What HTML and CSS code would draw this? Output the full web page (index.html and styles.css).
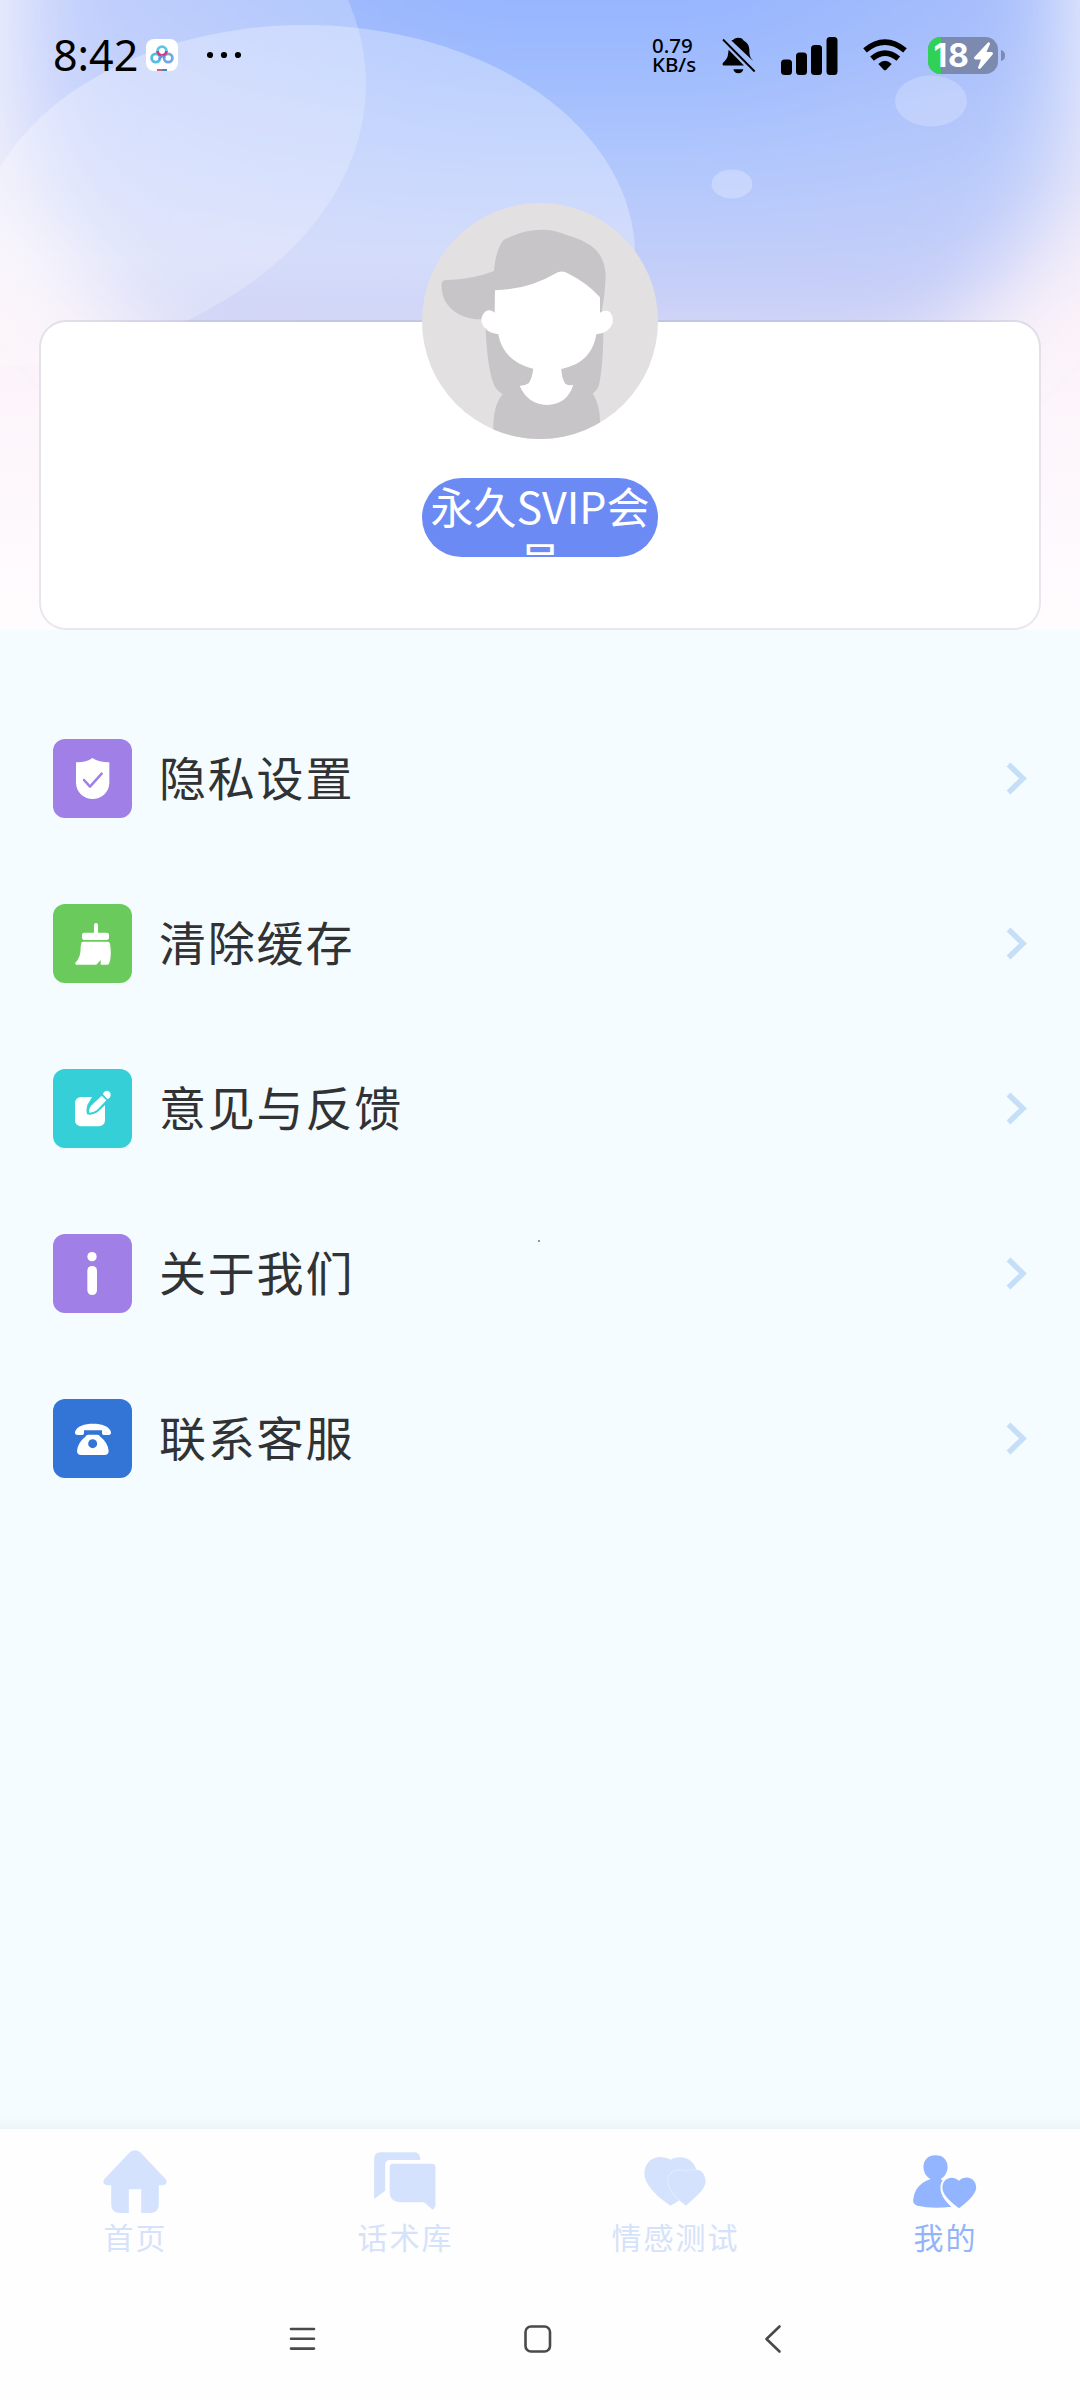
FILE: index.html
```html
<!DOCTYPE html>
<html lang="zh-CN">
<head>
<meta charset="utf-8">
<title>我的</title>
<link rel="stylesheet" href="styles.css">
</head>
<body>
<header class="hero">
  <svg class="hero-bg" viewBox="0 0 1080 630" preserveAspectRatio="none" aria-hidden="true">
    <defs>
      <linearGradient id="edge" x1="0" y1="0" x2="0" y2="1">
        <stop offset="0" stop-color="#f4f5fe"/>
        <stop offset=".3" stop-color="#f1edf9"/>
        <stop offset=".5" stop-color="#fbf2f9"/>
        <stop offset="1" stop-color="#fffcfe"/>
      </linearGradient>
      <linearGradient id="sky" gradientUnits="userSpaceOnUse" x1="0" y1="0" x2="0" y2="340">
        <stop offset="0" stop-color="#94b4fe"/>
        <stop offset=".5" stop-color="#b1c8fd"/>
        <stop offset="1" stop-color="#d0d2f5"/>
      </linearGradient>
      <linearGradient id="lilac" x1="0" y1="0" x2="1" y2="0">
        <stop offset="0" stop-color="#d3d2f6" stop-opacity=".5"/>
        <stop offset=".45" stop-color="#c4caf6" stop-opacity="0"/>
        <stop offset=".65" stop-color="#c4caf6" stop-opacity="0"/>
        <stop offset="1" stop-color="#ccd2f7" stop-opacity=".4"/>
      </linearGradient>
      <linearGradient id="veil" gradientUnits="userSpaceOnUse" x1="0" y1="260" x2="0" y2="335">
        <stop offset="0" stop-color="#fff" stop-opacity=".3"/>
        <stop offset="1" stop-color="#fff" stop-opacity="0"/>
      </linearGradient>
      <filter id="soft" x="-20%" y="-20%" width="140%" height="140%"><feGaussianBlur stdDeviation="46 42"/></filter>
    </defs>
    <rect width="1080" height="630" fill="url(#edge)"/>
    <g filter="url(#soft)">
      <path d="M16-200H1070V130Q1040 290 900 370H190Q50 280 16 110Z" fill="url(#sky)"/>
      <path d="M16-200H1070V130Q1040 290 900 370H190Q50 280 16 110Z" fill="url(#lilac)"/>
    </g>
    <g fill="#fff" fill-opacity=".22">
      <ellipse cx="-36" cy="84" rx="402" ry="284"/>
      <ellipse cx="305" cy="255" rx="330" ry="230" fill="url(#veil)" fill-opacity="1"/>
      <ellipse cx="931" cy="101" rx="36" ry="25.5"/>
      <ellipse cx="732" cy="184" rx="20.5" ry="14.5" fill-opacity=".26"/>
    </g>
  </svg>

  <div class="status">
    <div class="status-side">
      <span class="time">8:42</span>
      <svg class="app" viewBox="0 0 32 32">
        <rect width="32" height="32" rx="8" fill="#fff"/>
        <g fill="none" stroke-width="2.8">
          <circle cx="9.8" cy="19" r="4.2" stroke="#55bde3"/>
          <circle cx="22.2" cy="19" r="4.2" stroke="#6fa9e6"/>
          <circle cx="16" cy="12" r="4.4" stroke="#5cc6e4"/>
          <path d="M11.600 12a4.400 4.400 0 0 0 8.800 0" stroke="#d93a7c"/>
          <path d="M12.800 20.500L16 16.800L19 19" stroke="#6a8fdc" stroke-width="2"/>
        </g>
        <path d="M11 30h5v2h-5z" fill="#e05a72"/><path d="M16 30h5v2h-5z" fill="#4484b8"/>
      </svg>
      <svg class="dots" viewBox="0 0 34 8"><circle cx="3" cy="4" r="3.1"/><circle cx="17" cy="4" r="3.1"/><circle cx="31" cy="4" r="3.1"/></svg>
    </div>
    <div class="status-side">
      <span class="speed">0.79<br>KB/s</span>
      <svg class="bell" viewBox="304 108 102 110">
        <path d="M332 118Q340 117 341 113Q353 107 365 113Q367 118 373 121Q385 129 386 145Q386 165 391 171L398 180ZM324 146L370 193H308Q304 191 307 185Q321 172 322 160ZM338 204H368Q365 216 353 216T338 204Z"/>
        <path d="M307 115L402 211" stroke="#000" stroke-width="5.5"/>
      </svg>
      <svg class="signal" viewBox="0 0 57 38"><rect x="0" y="22.500" width="11" height="15.500" rx="3.500"/><rect x="15" y="15.500" width="11" height="22.500" rx="3.500"/><rect x="30" y="8" width="11" height="30" rx="3.500"/><rect x="45.500" y="0" width="11" height="38" rx="3.500"/></svg>
      <svg class="wifi" viewBox="730 115 132 96">
        <g fill="none" stroke="#000" stroke-width="17"><path d="M736 149Q796 100 856 149"/><path d="M757 174Q796 141 836 174"/></g>
        <path d="M776 190Q796 170 816 190L800 207Q796 211 792 207Z"/>
      </svg>
      <svg class="battery" viewBox="0 0 77 37">
        <defs><clipPath id="cell"><rect width="70" height="37" rx="12.500"/></clipPath></defs>
        <g clip-path="url(#cell)"><path d="M0 0h70v37H0z" fill="#7c8aaf"/><path d="M0 0h13v37H0z" fill="#31d158"/></g>
        <path d="M73 13q4 1 4 5.500t-4 5.500z" fill="#7c8aaf"/>
        <text x="5.500" y="30" class="charge">18</text>
        <path d="M60 5.500L46 20.500Q46 22.500 47.500 22.500H53L50 30.500Q50.500 33 53 31L65 17Q65 15 63.500 15H58.500L62 7Q62 4.500 60 5.500Z" fill="#fff"/>
      </svg>
    </div>
  </div>

  <section class="card">
    <svg class="avatar" viewBox="66 39 708 708">
      <defs><clipPath id="round"><circle cx="420" cy="393" r="354"/></clipPath></defs>
      <g clip-path="url(#round)">
        <path d="M66 39h708v708H66z" fill="#e2e0e1"/>
        <path fill="#c7c5c7" d="M282 243C285 205 295 165 312 149Q365 121 420 119Q462 118 500 135C570 155 616 185 617 260Q616 310 606 360L610 420Q610 520 598 580Q593 602 578 610Q602 650 600 700V760H280V700Q283 640 308 612Q288 602 280 580Q262 530 257 420L245 388C180 390 120 350 125 280Q128 270 140 270Q220 268 282 243Z"/>
        <path fill="#fff" d="M285 301Q385 298 465 251Q485 238 503 250Q560 278 600 322V368Q615 357 630 366Q642 380 637 402Q624 431 589 433C580 490 545 525 484 537Q485 565 496 581Q505 587 520 585Q500 644 441 645Q382 642 359 587Q374 588 386 580Q397 562 400 536C345 523 305 490 295 433Q255 427 245 398Q241 378 257 364Q270 356 284 368Z"/>
      </g>
    </svg>
    <div class="badge">永久SVIP会员</div>
  </section>
</header>

<main class="menu">
  <a class="row">
    <svg class="icon violet" viewBox="39 57 237 237"><path fill="#fff" d="M108 127Q138 128 157 114Q180 128 208 127V188C208 218 182 237 158 237S108 218 108 188Z"/><path d="M132 180L150 200L185 161" fill="none" stroke="#a07fe6" stroke-width="7.500" stroke-linecap="round" stroke-linejoin="round"/></svg>
    <span class="label">隐私设置</span>
    <svg class="arrow" viewBox="0 0 21 33"><path d="M2.500 2.500L17 16.500L2.500 30.500"/></svg>
  </a>
  <a class="row">
    <svg class="icon green" viewBox="39 552 237 237"><g fill="#fff"><path d="M162 642V616q0-7 6-7t6 7v26z"/><rect x="126" y="638" width="81" height="22" rx="7"/><path d="M124 668Q126 665 131 665H203Q209 665 210 671Q216 705 208 729Q207 734 202 734H182V720L169 734H109Q104 733 106 728Q123 712 122 680Z"/></g></svg>
    <span class="label">清除缓存</span>
    <svg class="arrow" viewBox="0 0 21 33"><path d="M2.500 2.500L17 16.500L2.500 30.500"/></svg>
  </a>
  <a class="row">
    <svg class="icon cyan" viewBox="39 57 237 237"><rect x="105" y="141" width="90" height="88" rx="18" fill="#fff"/><path d="M160 134L142 165Q137 181 141 193Q156 197 172 187L202 159V130Z" fill="#35cfd8"/><path d="M185 137L199 151L172 179Q161 188 147 188Q146 173 158 163Z" fill="#fff"/><path d="M189 133Q191 122 201 122Q212 124 212 134Q212 144 202 147Z" fill="#fff"/></svg>
    <span class="label">意见与反馈</span>
    <svg class="arrow" viewBox="0 0 21 33"><path d="M2.500 2.500L17 16.500L2.500 30.500"/></svg>
  </a>
  <a class="row">
    <svg class="icon violet" viewBox="39 552 237 237"><g fill="#fff"><circle cx="156" cy="620" r="14"/><rect x="142" y="648" width="29" height="87" rx="14"/></g></svg>
    <span class="label">关于我们</span>
    <svg class="arrow" viewBox="0 0 21 33"><path d="M2.500 2.500L17 16.500L2.500 30.500"/></svg>
  </a>
  <a class="row">
    <svg class="icon blue" viewBox="39 1047 237 237"><path fill="#fff" d="M105 1146C110 1128 134 1121 159 1121S208 1128 213 1146Q214 1155 205 1155H191Q186 1155 186 1149V1141H132V1149Q132 1155 127 1155H113Q104 1155 105 1146Z"/><path fill="#fff" d="M136 1160Q139 1154 145 1154H172Q178 1154 181 1160Q203 1177 206 1202Q206 1215 193 1215H124Q111 1215 111 1202Q114 1177 136 1160Z"/><circle cx="158" cy="1181" r="13.500" fill="#3275d7"/></svg>
    <span class="label">联系客服</span>
    <svg class="arrow" viewBox="0 0 21 33"><path d="M2.500 2.500L17 16.500L2.500 30.500"/></svg>
  </a>
  <i class="speck"></i>
</main>

<nav class="tabs">
  <a class="tab">
    <svg viewBox="286.5 110 209 216" preserveAspectRatio="none"><path fill="#d5e2fd" d="M376 126Q391 114 406 126L479 205Q487 215 479 222Q475 225 460 225V282Q460 308 434 308H409V237H373V308H348Q322 308 322 282V225Q307 225 303 222Q295 215 303 205Z"/></svg>
    <span>首页</span>
  </a>
  <a class="tab">
    <svg viewBox="1071 110 209 216" preserveAspectRatio="none"><g fill="#d5e2fd"><path d="M1086 266V145Q1086 126 1105 126H1204Q1219 126 1220 149H1132Q1118 149 1118 163V241Z"/><path d="M1131 170Q1131 160 1141 160H1253Q1264 160 1264 171V285Q1262 294 1256 298L1231 276H1160Q1131 274 1131 245Z"/></g></svg>
    <span>话术库</span>
  </a>
  <a class="tab">
    <svg viewBox="286.5 110 209 216" preserveAspectRatio="none"><path fill="#d5e2fd" d="M378 148C400 136 440 136 453 178Q477 179 480 213C478 235 465 248 423 286L403 270Q393 278 378 286C330 252 303 220 302 190C304 142 345 130 378 148Z"/><path fill="none" stroke="#e3ecff" stroke-width="3" d="M403 270C368 237 362 205 379 188Q398 172 421 182Q436 176 453 179"/></svg>
    <span>情感测试</span>
  </a>
  <a class="tab active">
    <svg viewBox="1071 110 209 216" preserveAspectRatio="none"><g fill="#93b5ff"><path d="M1134 206C1106 195 1102 135 1148 135S1190 194 1163 206Q1165 208 1168 210C1154 235 1166 265 1194 289Q1140 297 1095 286Q1083 283 1083 270Q1087 222 1134 206Z"/><path d="M1216 211C1235 193 1266 202 1266 233Q1264 257 1216 294Q1168 257 1168 233C1168 202 1198 194 1216 211Z"/></g></svg>
    <span>我的</span>
  </a>
</nav>

<footer class="system">
  <svg viewBox="0 0 30 30"><path d="M3 5h23M3 14.800h23M3 24.600h23"/></svg>
  <svg viewBox="0 0 30 30"><rect x="2.500" y="2.500" width="24.500" height="25" rx="5.500"/></svg>
  <svg viewBox="0 0 30 30"><path d="M21.500 2.500L8.500 15L21.500 27.500"/></svg>
</footer>
</body>
</html>
```
FILE: styles.css
```css
* { box-sizing: border-box; }

body {
  margin: 0;
  width: 1080px;
  height: 2400px;
  display: flex;
  flex-direction: column;
  background: #fefefe;
  font-family: "Noto Sans", "Noto Sans CJK SC", sans-serif;
  overflow: hidden;
}

svg { display: block; flex: none; }

.hero {
  position: relative;
  height: 630px;
  padding: 0 39px;
  display: flex;
  flex-direction: column;
}

.hero-bg {
  position: absolute;
  inset: 0;
  width: 1080px;
  height: 630px;
}

.status {
  position: relative;
  height: 110px;
  margin-bottom: 210px;
  padding: 0 36px 0 14px;
  display: flex;
  justify-content: space-between;
  align-items: center;
}

.status-side { display: flex; align-items: center; }

.time {
  width: 93px;
  font-size: 43px;
  line-height: 60px;
  color: #000;
}

.app { width: 32px; height: 32px; }
.dots { width: 34px; height: 8px; margin-left: 29px; }

.speed {
  width: 70px;
  font-size: 20.5px;
  line-height: 19px;
  font-weight: 500;
  color: #000;
}

.bell { width: 34px; height: 37px; }
.signal { width: 57px; height: 38px; margin: 1px 0 0 25px; }
.wifi { width: 44px; height: 32px; margin-left: 25px; }
.battery { width: 77px; height: 37px; margin-left: 21px; }

.charge {
  font: 700 32px Inter, "Noto Sans", sans-serif;
  letter-spacing: 0.8px;
  fill: #fff;
}

.card {
  position: relative;
  height: 310px;
  border: 2px solid rgba(120, 125, 150, 0.16);
  border-radius: 27px;
  background: #fff;
  background-clip: padding-box;
  display: flex;
  flex-direction: column;
  align-items: center;
}

.avatar { width: 236px; height: 236px; margin-top: -119px; }

.badge {
  width: 236px;
  height: 79px;
  margin-top: 39px;
  border-radius: 40px;
  background: #6c8af4;
  color: #fff;
  font-family: "Noto Sans CJK SC", sans-serif;
  font-size: 43px;
  line-height: 54.5px;
  text-align: center;
  word-break: break-all;
  overflow: hidden;
}

.menu {
  position: relative;
  flex: 1;
  padding: 66px 53px 0;
  background: linear-gradient(#f5fcff calc(100% - 12px), #ecf5f8);
}

.row { height: 165px; display: flex; align-items: center; }

.icon { width: 79px; height: 79px; border-radius: 12px; }
.violet { background: #a07fe6; }
.green { background: #6aca5c; }
.cyan { background: #35cfd8; }
.blue { background: #3275d7; }

.label {
  flex: 1;
  margin-left: 27px;
  padding-bottom: 7px;
  font-family: "Noto Sans CJK SC", sans-serif;
  font-size: 47px;
  letter-spacing: 1.8px;
  color: #303234;
}

.arrow {
  width: 21px;
  height: 33px;
  fill: none;
  stroke: #c5dff9;
  stroke-width: 5.5px;
}

.speck {
  position: absolute;
  left: 538px;
  top: 610px;
  width: 2px;
  height: 2px;
  background: #8d9698;
}

.tabs {
  height: 147px;
  padding-top: 18px;
  display: grid;
  grid-template-columns: repeat(4, 270px);
  background: #fefefe;
}

.tab {
  display: flex;
  flex-direction: column;
  align-items: center;
  font-family: "Noto Sans CJK SC", sans-serif;
  font-size: 30px;
  line-height: 34px;
  letter-spacing: 2px;
  color: #d6e2f9;
}

.tab svg { width: 72px; height: 72px; margin-left: -1px; }
.tab span { padding-left: 1px; }
.active { color: #93b5f8; }

.system {
  height: 124px;
  padding: 1px 0 0 185px;
  display: grid;
  grid-template-columns: repeat(3, 235px);
  place-items: center;
}

.system svg {
  width: 30px;
  height: 30px;
  fill: none;
  stroke: #4a4a4a;
  stroke-width: 2.6px;
  stroke-linecap: round;
  stroke-linejoin: round;
}
```
